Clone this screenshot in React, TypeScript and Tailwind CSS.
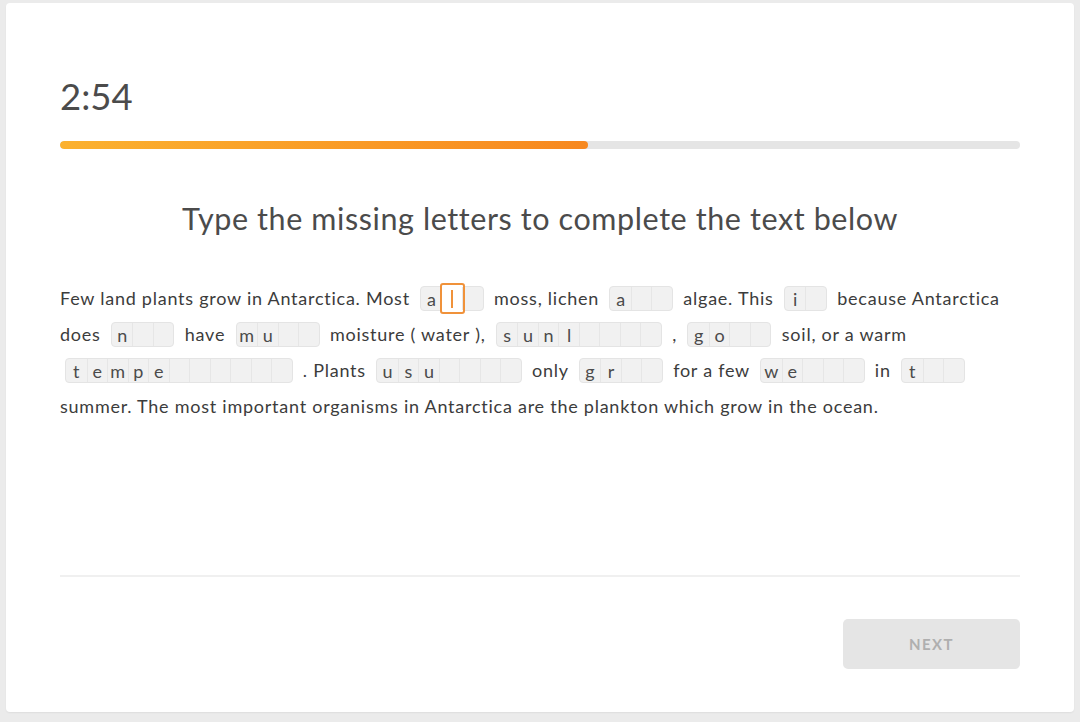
import React from "react";

type Blank = { given: string; total: number; active?: number };

// text pieces and blanks, in reading order
const passage: (string | Blank)[] = [
  "Few land plants grow in Antarctica. Most",
  { given: "a", total: 3, active: 1 },
  "moss, lichen",
  { given: "a", total: 3 },
  "algae. This",
  { given: "i", total: 2 },
  "because Antarctica",
  "does",
  { given: "n", total: 3 },
  "have",
  { given: "mu", total: 4 },
  "moisture ( water ),",
  { given: "sunl", total: 8 },
  ",",
  { given: "go", total: 4 },
  "soil, or a warm",
  { given: "tempe", total: 11 },
  ". Plants",
  { given: "usu", total: 7 },
  "only",
  { given: "gr", total: 4 },
  "for a few",
  { given: "we", total: 5 },
  "in",
  { given: "t", total: 3 },
  "summer. The most important organisms in Antarctica are the plankton which grow in the ocean.",
];

const LetterBox: React.FC<{ blank: Blank }> = ({ blank }) => {
  const cells = Array.from({ length: blank.total }, (_, i) => blank.given[i] ?? "");
  return (
    <span className="inline-flex align-middle mx-[5px] -mt-[3px] rounded-[4px] border border-[#e4e4e4] bg-[#f1f1f1] tracking-normal leading-none">
      {cells.map((ch, i) => (
        <span
          key={i}
          className={`relative w-[20.5px] h-[23px] flex items-center justify-center text-[18px] leading-none text-[#4b4b4b] ${
            i > 0 ? "border-l border-[#e6e6e6]" : ""
          }`}
        >
          {ch}
          {blank.active === i && (
            <span className="absolute -inset-x-[3px] -inset-y-[4px] border-2 border-[#f0923a] rounded-[3px] bg-white flex items-center justify-center">
              <span className="w-[2px] h-[18px] bg-[#f0923a]" />
            </span>
          )}
        </span>
      ))}
    </span>
  );
};

export default function App() {
  return (
    <div
      className="w-full h-[722px] bg-[#ebebeb] pt-[3px] px-[6px] pb-[10px]"
      style={{ fontFamily: "Lato, 'Open Sans', sans-serif" }}
    >
      <div className="h-full bg-white rounded-[4px] shadow-[0_1px_2px_rgba(0,0,0,0.06)] flex flex-col px-[54px] pt-[71px] pb-[43px]">
        {/* Timer */}
        <div className="text-[36.5px] leading-[44px] text-[#4b4b4b]">2:54</div>

        {/* Progress */}
        <div className="mt-[23px] h-2 w-full rounded-full bg-[#e5e5e5] overflow-hidden">
          <div className="h-full w-[55%] rounded-full bg-gradient-to-r from-[#fbb12f] to-[#f7881f]" />
        </div>

        {/* Prompt */}
        <h1 className="mt-[49px] text-center text-[30.5px] tracking-[0.6px] leading-[40px] text-[#4b4b4b]">
          Type the missing letters to complete the text below
        </h1>

        {/* Passage */}
        <p className="mt-[42px] text-[18px] tracking-[0.75px] leading-[36px] text-[#3c3c3c]">
          {passage.map((part, i) =>
            typeof part === "string" ? (
              <React.Fragment key={i}>{part} </React.Fragment>
            ) : (
              <React.Fragment key={i}>
                <LetterBox blank={part} />{" "}
              </React.Fragment>
            )
          )}
        </p>

        {/* Footer */}
        <div className="mt-auto h-[2px] bg-[#f0f0f0]" />
        <div className="mt-[42px] flex justify-end">
          <button className="w-[177px] h-[50px] rounded-[5px] bg-[#e5e5e5] text-[15px] font-bold tracking-[1.5px] text-[#afafaf]">
            NEXT
          </button>
        </div>
      </div>
    </div>
  );
}
